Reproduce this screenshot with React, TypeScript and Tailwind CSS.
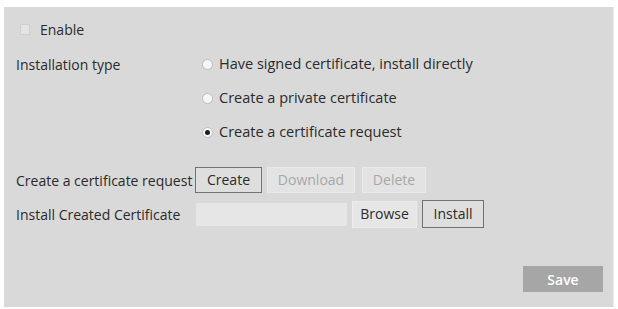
import React from "react";

const font = { fontFamily: '"Open Sans", "Noto Sans", sans-serif' };

function Radio({ checked, label }: { checked?: boolean; label: string }) {
    return (
        <label className="flex items-center h-[34px] ml-[6px] gap-[6px] text-[14.5px] text-[#2b2b2b]">
            <span className="w-[11px] h-[11px] rounded-full bg-[#f6f6f6] border border-[#bdbdbd] flex items-center justify-center">
                {checked && <span className="w-[5px] h-[5px] rounded-full bg-[#1e1e1e]" />}
            </span>
            {label}
        </label>
    );
}

function Btn({ children, dark, disabled, className }: { children: React.ReactNode; dark?: boolean; disabled?: boolean; className?: string }) {
    return (
        <button
            className={`h-[26px] px-[6px] text-[14px] leading-none border ${
                disabled ? "bg-[#e3e3e3] border-[#e9e9e9] text-[#a8a8a8]" : dark ? "bg-[#dedede] border-[#727272] text-[#2b2b2b]" : "bg-[#e6e6e6] border-[#ececec] text-[#2b2b2b]"
            } ${className ?? ""}`}
        >
            {children}
        </button>
    );
}

export default function App() {
    return (
        <div className="w-[618px] h-[309px] bg-white pt-[7px] pl-[4px]" style={font}>
            <div className="w-[610px] h-[300px] bg-[#d9d9d9] border-r border-[#ececec] pt-[9px] pl-[12px] pr-[10px] flex flex-col">
                <div className="flex items-center h-[26px] pl-[4px] gap-[10px] text-[14px] text-[#2b2b2b]">
                    <span className="w-[10px] h-[11px] bg-[#e4e4e4] border border-[#cfcfcf]" />
                    Enable
                </div>
                <div className="flex mt-[5px]">
                    <div className="w-[180px] h-[34px] flex items-center text-[14px] text-[#2b2b2b]">Installation type</div>
                    <div className="flex flex-col">
                        <Radio label="Have signed certificate, install directly" />
                        <Radio label="Create a private certificate" />
                        <Radio checked label="Create a certificate request" />
                    </div>
                </div>
                <div className="flex items-center mt-[18px] h-[26px]">
                    <div className="w-[179px] text-[14px] text-[#2b2b2b] whitespace-nowrap">Create a certificate request</div>
                    <Btn dark className="w-[67px]">Create</Btn>
                    <Btn disabled className="w-[88px] ml-[5px]">Download</Btn>
                    <Btn disabled className="w-[64px] ml-[7px]">Delete</Btn>
                </div>
                <div className="flex items-center mt-[7px] h-[28px]">
                    <div className="w-[180px] text-[14px] text-[#2b2b2b]">Install Created Certificate</div>
                    <input className="w-[151px] h-[23px] bg-[#e6e6e6] border-0 outline-none" />
                    <Btn className="w-[65px] h-[27px] ml-[5px]">Browse</Btn>
                    <Btn dark className="w-[62px] h-[28px] ml-[5px]">Install</Btn>
                </div>
                <div className="flex justify-end mt-[38px]">
                    <button className="w-[80px] h-[26px] bg-[#a6a6a6] text-white text-[14px] font-semibold">Save</button>
                </div>
            </div>
        </div>
    );
}
